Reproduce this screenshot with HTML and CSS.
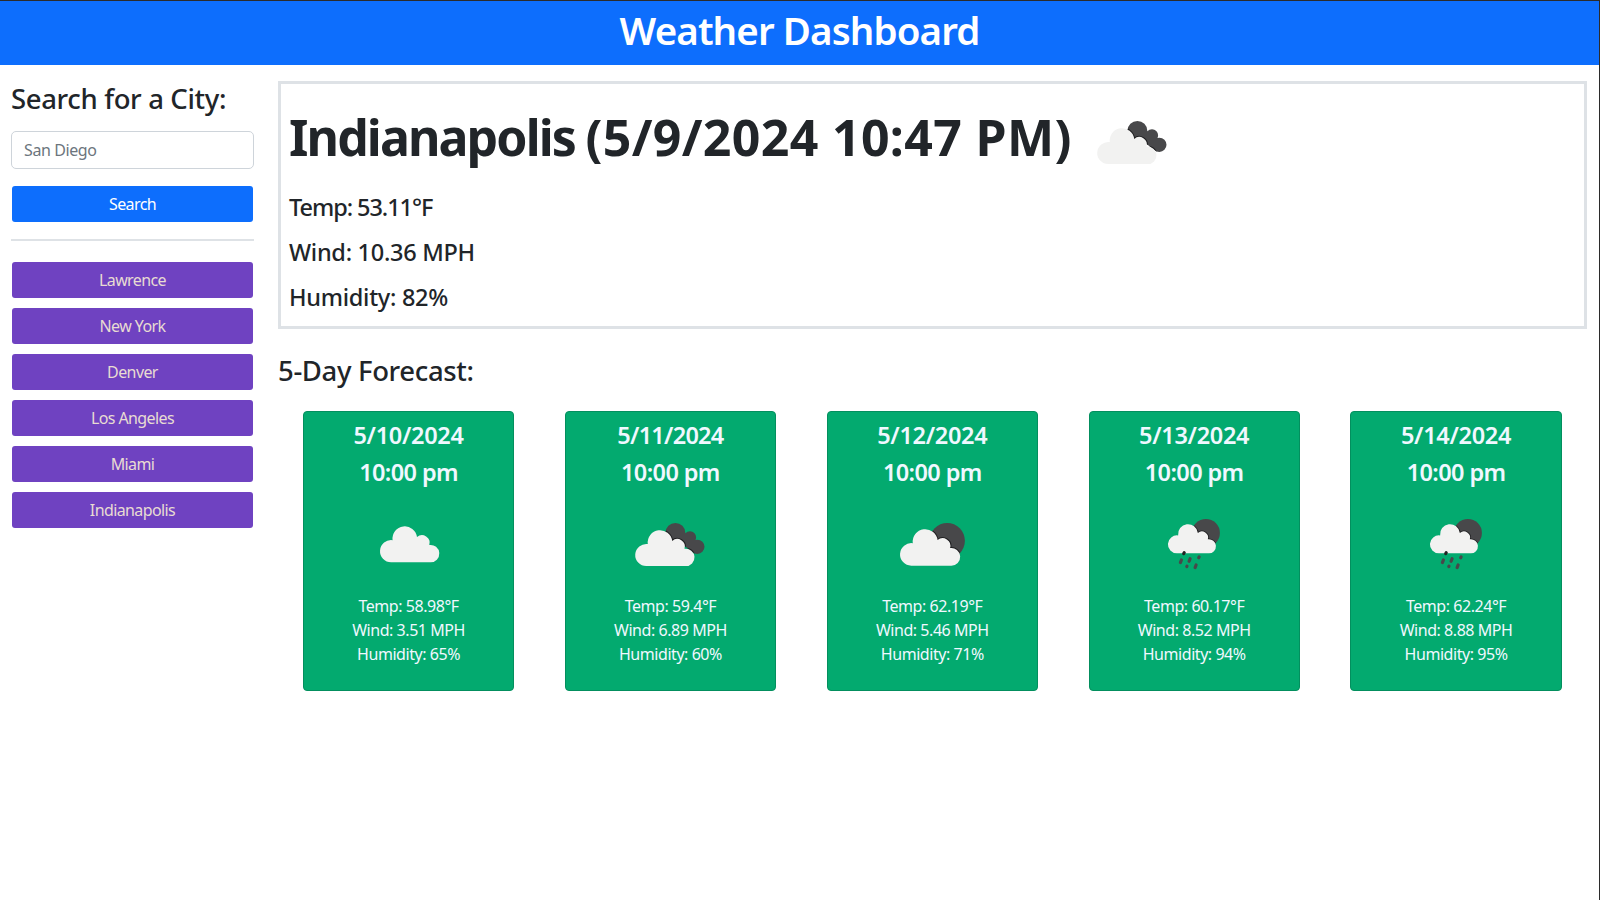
FILE: index.html
```html
<!DOCTYPE html>
<html lang="en">
<head>
<meta charset="utf-8">
<title>Weather Dashboard</title>
<link rel="stylesheet" href="styles.css">
</head>
<body>
<svg class="defs" width="0" height="0">
  <defs>
    <path id="cloud" d="M11.1 37.1A11.1 11.1 0 1 1 12.6 15A12.2 12.2 0 1 1 37 11.9A7.6 7.6 0 0 1 49.3 19.8A8.7 8.7 0 1 1 50.4 37.1Z"/>
    <clipPath id="back-cloud"><circle cx="55.4" cy="37.8" r="9.9"/><circle cx="70" cy="42.3" r="6.1"/><circle cx="77.4" cy="51.8" r="7.1"/><path d="M50 40L62 36L75 45L74 58Z"/></clipPath>
    <clipPath id="sun-disc"><circle cx="65.2" cy="45.7" r="17.7"/></clipPath>
    <clipPath id="rain-disc"><circle cx="61.9" cy="38" r="14"/></clipPath>
    <symbol id="overcast" viewBox="0 0 100 100"><use href="#cloud" class="light" x="21" y="30.2"/></symbol>
    <symbol id="broken" viewBox="0 0 100 100">
      <g clip-path="url(#back-cloud)"><rect class="dark" width="100" height="100"/><use href="#cloud" class="shade" x="15.2" y="34"/></g>
      <use href="#cloud" class="light" x="15.2" y="34"/>
    </symbol>
    <symbol id="few" viewBox="0 0 100 100">
      <g clip-path="url(#sun-disc)"><rect class="dark" width="100" height="100"/><use href="#cloud" class="shade" transform="translate(18 33) scale(1.015)"/></g>
      <use href="#cloud" class="light" transform="translate(18 33) scale(1.015)"/>
    </symbol>
    <symbol id="rain" viewBox="0 0 100 100">
      <g clip-path="url(#rain-disc)"><rect class="dark" width="100" height="100"/><use href="#cloud" class="shade" transform="translate(23.9 28.3) scale(.81)"/></g>
      <use href="#cloud" class="light" transform="translate(23.9 28.3) scale(.81)"/>
      <path class="drops" d="M37.4 65L36.4 67.6M46.1 63.7L45.1 66.3M55.1 62L54.7 62.7M43 71.1L42.8 71.5M52.1 70L51.1 72.6"/>
      <path class="drops first" d="M40.2 57.6L39.7 58.6"/>
    </symbol>
  </defs>
</svg>
<header class="header"><h1 class="title">Weather Dashboard</h1></header>
<main class="layout">
  <aside class="sidebar">
    <h3 class="label">Search for a City:</h3>
    <input class="field" type="text" placeholder="San Diego">
    <button class="btn search">Search</button>
    <hr class="rule">
    <div class="history">
      <button class="btn city">Lawrence</button>
      <button class="btn city">New York</button>
      <button class="btn city">Denver</button>
      <button class="btn city">Los Angeles</button>
      <button class="btn city">Miami</button>
      <button class="btn city">Indianapolis</button>
    </div>
  </aside>
  <section class="content">
    <div class="current">
      <div class="current-head">
        <h2 class="place"><span class="name">Indianapolis</span> <span class="when">(5/9/2024 10:47 PM)</span></h2>
        <svg class="icon"><use href="#broken"/></svg>
      </div>
      <p class="stat temp">Temp: 53.11°F</p>
      <p class="stat">Wind: 10.36 MPH</p>
      <p class="stat">Humidity: 82%</p>
    </div>
    <h3 class="subtitle">5-Day Forecast:</h3>
    <div class="forecast">
      <article class="card"><h4 class="date">5/10/2024</h4><h4 class="time">10:00 pm</h4><svg class="icon"><use href="#overcast"/></svg><p class="line">Temp: 58.98°F</p><p class="line">Wind: 3.51 MPH</p><p class="line">Humidity: 65%</p></article>
      <article class="card"><h4 class="date narrow">5/11/2024</h4><h4 class="time">10:00 pm</h4><svg class="icon"><use href="#broken"/></svg><p class="line">Temp: 59.4°F</p><p class="line">Wind: 6.89 MPH</p><p class="line">Humidity: 60%</p></article>
      <article class="card"><h4 class="date">5/12/2024</h4><h4 class="time">10:00 pm</h4><svg class="icon"><use href="#few"/></svg><p class="line">Temp: 62.19°F</p><p class="line">Wind: 5.46 MPH</p><p class="line">Humidity: 71%</p></article>
      <article class="card"><h4 class="date">5/13/2024</h4><h4 class="time">10:00 pm</h4><svg class="icon"><use href="#rain"/></svg><p class="line">Temp: 60.17°F</p><p class="line">Wind: 8.52 MPH</p><p class="line">Humidity: 94%</p></article>
      <article class="card"><h4 class="date">5/14/2024</h4><h4 class="time">10:00 pm</h4><svg class="icon"><use href="#rain"/></svg><p class="line">Temp: 62.24°F</p><p class="line">Wind: 8.88 MPH</p><p class="line">Humidity: 95%</p></article>
    </div>
  </section>
</main>
</body>
</html>
```
FILE: styles.css
```css
* { box-sizing: border-box; }
body {
  margin: 0;
  height: 900px;
  overflow: hidden;
  border-top: 1px solid #2b2b2b;
  border-right: 1px solid #2b2b2b;
  background: #fff;
  color: #212529;
  font-family: "Segoe UI", "Noto Sans", "Open Sans", sans-serif;
  font-size: 16px;
  line-height: 24px;
}
h1, h2, h3, h4, p { margin: 0; }
.defs { position: absolute; }
.header { height: 64px; background: #0d6efd; color: #fff; text-align: center; padding-top: 5px; }
.title { font-size: 38.5px; line-height: 48px; font-weight: 600; letter-spacing: -0.9px; }
.layout { display: flex; padding: 16px 12px 0 11px; }
.sidebar { width: 243px; margin-right: 24px; }
.label, .subtitle { font-size: 27.5px; line-height: 34px; font-weight: 500; letter-spacing: -0.35px; white-space: nowrap; }
.label { height: 50px; padding-top: 1px; }
.field {
  display: block; width: 100%; height: 38px; padding: 0 12px;
  border: 1px solid #ced4da; border-radius: 5px; background: #fff;
  font: inherit; letter-spacing: -0.4px;
}
.field::placeholder { color: #6c757d; opacity: 1; }
.btn {
  display: block; width: 241px; height: 36px; margin: 0 1px; padding: 0;
  border: 0; border-radius: 3px; font: inherit; letter-spacing: -0.6px; text-align: center;
}
.search { margin-top: 17px; background: #0d6efd; color: #fff; }
.rule { height: 2px; margin: 17px 0 21px; border: 0; background: #dee2e6; }
.history { display: grid; gap: 10px; }
.city { background: #6f42c1; color: #e8dcd2; }
.content { flex: 1; min-width: 0; }
.current { height: 248px; padding: 9px 8px 0; border: 3px solid #dee2e6; }
.current-head { display: flex; height: 100px; }
.place { width: 793px; font-size: 50px; line-height: 88px; font-weight: 700; letter-spacing: -2.5px; white-space: nowrap; }
.name { letter-spacing: -1.9px; }
.when { letter-spacing: 0.35px; }
.icon { display: block; width: 100px; height: 100px; flex: none; }
.stat { font-size: 23.5px; line-height: 29px; margin-bottom: 16px; font-weight: 500; letter-spacing: -0.28px; }
.temp { letter-spacing: -1.05px; }
.subtitle { margin-top: 25px; }
.forecast { display: grid; grid-template-columns: repeat(5, 211.2px); justify-content: space-around; margin: 23px 0 0 -0.4px; }
.card {
  height: 280px; padding-top: 5px; border: 1px solid #038f5e; border-radius: 4px;
  background: #03aa6f; color: #f0f8ff; text-align: center;
}
.date, .time { font-size: 23.5px; line-height: 37px; font-weight: 600; letter-spacing: -0.3px; }
.time { letter-spacing: -0.6px; }
.narrow { letter-spacing: -0.75px; }
.card .icon { margin: 4px auto -1px; }
.line { letter-spacing: -0.45px; }
.light { fill: #f2f2f1; }
.dark { fill: #48484a; }
.shade { fill: #202022; stroke: #202022; stroke-width: 2; }
.drops { fill: none; stroke: #48484a; stroke-width: 3.2; stroke-linecap: round; }
.first { stroke: #222; }
```
